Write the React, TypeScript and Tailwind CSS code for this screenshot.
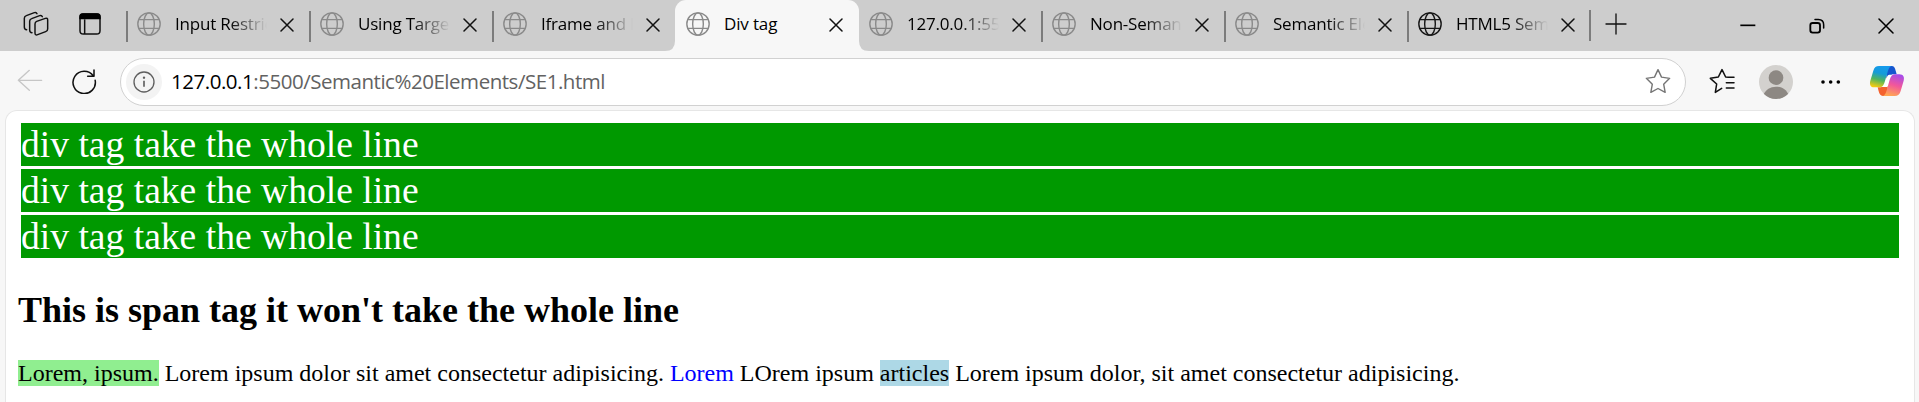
import React from "react";

type Tab = { title: string; active?: boolean; dark?: boolean; divider?: boolean };

const tabs: Tab[] = [
  { title: "Input Restrictions", divider: true },
  { title: "Using Target", divider: true },
  { title: "Iframe and Links", divider: true },
  { title: "Div tag", active: true },
  { title: "127.0.0.1:5500" },
  { title: "Non-Semantic", divider: true },
  { title: "Semantic Elements", divider: true },
  { title: "HTML5 Semantic", dark: true, divider: true },
];

function Globe({ dark }: { dark?: boolean }) {
  return (
    <svg viewBox="0 0 72 72" fill="none" strokeWidth="4.2" className={dark ? "size-6 shrink-0 stroke-[#161616]" : "size-6 shrink-0 stroke-[#8a8a8a]"}>
      <circle cx="36" cy="36" r="33.5" />
      <ellipse cx="36" cy="36" rx="16" ry="33.5" />
      <path d="M5 23H67M5 49H67" />
    </svg>
  );
}

function Cross() {
  return (
    <svg viewBox="0 0 42 42" fill="none" stroke="#111" strokeWidth="4.5" strokeLinecap="round" className="size-3.5 shrink-0">
      <path d="M3 3L39 39M39 3L3 39" />
    </svg>
  );
}

function Workspaces() {
  return (
    <svg viewBox="0 0 78 78" fill="none" stroke="#111" strokeWidth="4.4" strokeLinecap="round" strokeLinejoin="round" className="size-[26px] shrink-0">
      <path d="M41 31L67 22Q74 20 74 27V54Q74 60 68 62L44 71Q36 74 36 66V39Q36 33 41 31Z" />
      <path d="M27 65Q20 65 20 57V31Q20 25 26 23L50 14Q56 12 58 17" />
      <path d="M11 56Q4 56 4 48V22Q4 16 10 14L34 5Q40 3 42 8" />
    </svg>
  );
}

function TabActions() {
  return (
    <svg viewBox="0 0 72 72" className="size-6 shrink-0">
      <rect x="6" y="6" width="60" height="60" rx="10" fill="none" stroke="#111" strokeWidth="4.5" />
      <path d="M4 22V14Q4 4 14 4H58Q68 4 68 14V22Z" fill="#000" />
      <path d="M20 22V66" stroke="#111" strokeWidth="4.5" />
    </svg>
  );
}

function TabItem({ tab }: { tab: Tab }) {
  return (
    <div
      className={
        tab.active
          ? "relative flex h-[51px] w-[184px] -mr-px shrink-0 items-center rounded-t-[11px] bg-[#f7f7f7] pl-[11px]"
          : "relative flex h-[51px] w-[183px] shrink-0 items-center pl-[11px]"
      }
    >
      {tab.divider && <span className="absolute left-0 top-[11px] h-[31px] w-[1.5px] bg-[#7c7c7c]" />}
      {tab.active && (
        <>
          <svg viewBox="0 0 10 10" className="absolute -left-2.5 bottom-0 size-2.5">
            <path d="M10 0V10H0Q10 10 10 0Z" fill="#f7f7f7" />
          </svg>
          <svg viewBox="0 0 10 10" className="absolute -right-2.5 bottom-0 size-2.5">
            <path d="M0 0V10H10Q0 10 0 0Z" fill="#f7f7f7" />
          </svg>
        </>
      )}
      <div className="flex items-center pb-[3px]">
        <Globe dark={tab.dark} />
        <span
          className={
            tab.active
              ? "ml-[14px] w-[93px] overflow-hidden whitespace-nowrap text-[17px] leading-6 tracking-[-0.15px]"
              : "ml-[14px] w-[93px] overflow-hidden whitespace-nowrap text-[17px] leading-6 tracking-[-0.2px] [mask-image:linear-gradient(to_right,black_54px,transparent_92px)]"
          }
        >
          {tab.title}
        </span>
      </div>
      <div className="ml-3 pb-0.5">
        <Cross />
      </div>
    </div>
  );
}

function Copilot() {
  return (
    <svg viewBox="0 0 108 96" className="h-8 w-9 shrink-0">
      <defs>
        <linearGradient id="cool" x1="0.6" y1="0" x2="0.35" y2="1">
          <stop offset="0" stopColor="#169bed" />
          <stop offset="0.35" stopColor="#159bd8" />
          <stop offset="0.65" stopColor="#4fb45f" />
          <stop offset="1" stopColor="#f5cb12" />
        </linearGradient>
        <linearGradient id="warm" x1="0.7" y1="0" x2="0.4" y2="1">
          <stop offset="0" stopColor="#a64bea" />
          <stop offset="0.5" stopColor="#f2579b" />
          <stop offset="1" stopColor="#ffa653" />
        </linearGradient>
      </defs>
      <path d="M50 3H68C75 3 78 9 80 17L83 28H76C66 28 62 33 59 44L54 60Z" fill="#1656cf" />
      <path d="M58 93H42C34 93 31 87 29 79L26 67H32C42 67 46 62 49 51L54 34Z" fill="#f4622f" />
      <path d="M61 29H76L55 66H36L54 36C56 31 58 29 61 29Z" fill="#fff" />
      <path d="M30 3H68C61 5 58 13 55 24L47 51C43 63 39 67 30 67H16C4 67 1 58 4 47L13 17C16 7 21 3 30 3Z" fill="url(#cool)" />
      <path d="M78 28H91C103 28 107 37 104 47L95 78C92 88 87 93 77 93H42C49 91 51 83 54 73L62 44C66 33 70 28 78 28Z" fill="url(#warm)" />
    </svg>
  );
}

function TitleBar() {
  return (
    <div className="flex h-[51px] w-full items-center bg-[#cdcdcd]">
      <div className="flex w-[126px] shrink-0 items-center gap-[29px] pb-[3px] pl-[23px]">
        <Workspaces />
        <TabActions />
      </div>
      {tabs.map((t) => (
        <TabItem key={t.title} tab={t} />
      ))}
      <div className="flex flex-1 items-center">
        <span className="-ml-[1px] h-[31px] w-[1.5px] bg-[#7c7c7c]" />
        <svg viewBox="0 0 66 66" fill="none" stroke="#111" strokeWidth="4" strokeLinecap="round" className="-mt-1 ml-[14.500px] size-[22px]">
          <path d="M33 3V63M3 33H63" />
        </svg>
      </div>
      <div className="flex items-center gap-[53px] pr-[25.500px]">
        <svg viewBox="0 0 48 48" stroke="#000" strokeWidth="5" className="h-4 w-4">
          <path d="M1 22H46" />
        </svg>
        <svg viewBox="0 0 48 48" fill="none" stroke="#000" strokeWidth="5.500" className="h-4 w-4">
          <rect x="4" y="15" width="29" height="29" rx="7" />
          <path d="M18 4.500H28Q44 5 44 20V30" strokeLinecap="round" strokeWidth="4.500" />
        </svg>
        <svg viewBox="0 0 48 48" stroke="#000" strokeWidth="4.5" strokeLinecap="round" className="h-4 w-4">
          <path d="M3 3L45 45M45 3L3 45" />
        </svg>
      </div>
    </div>
  );
}

function Toolbar() {
  return (
    <div className="flex h-[59px] w-full items-center bg-[#f7f7f7] pb-0.5 pt-1.5">
      <svg viewBox="0 0 78 72" fill="none" stroke="#c6c6c6" strokeWidth="4" strokeLinecap="round" strokeLinejoin="round" className="-mt-1.5 ml-[17px] h-6 w-[26px] shrink-0">
        <path d="M74 37H4M37 7L4 37L37 67" />
      </svg>
      <svg viewBox="0 0 78 78" fill="none" stroke="#111" strokeWidth="4.6" strokeLinecap="round" strokeLinejoin="round" className="-mt-1 ml-7 size-[26px] shrink-0">
        <path d="M67 24A33.5 33.5 0 1 0 72.5 37M69 6V25H50" />
      </svg>
      <div className="-mt-0.5 ml-[23px] flex h-12 w-[1566px] shrink-0 items-center rounded-full border-[1.5px] border-[#d1d1d1] bg-white pl-[5px] pr-[14px]">
        <span className="flex size-9 items-center justify-center rounded-full bg-[#f3f3f3]">
          <svg viewBox="0 0 66 66" fill="none" stroke="#5f5f5f" strokeWidth="4" className="size-[22px]">
            <circle cx="33" cy="33" r="30" />
            <path d="M33 29V47" strokeWidth="5" />
            <circle cx="33" cy="20" r="3.5" fill="#5f5f5f" stroke="none" />
          </svg>
        </span>
        <span className="-mt-0.5 ml-[9px] flex-1 whitespace-nowrap text-[20.5px] leading-7 tracking-[-0.47px] text-[#626262]">
          <span className="text-black">127.0.0.1</span>:5500/Semantic%20Elements/SE1.html
        </span>
        <svg viewBox="0 0 78 78" fill="none" stroke="#757575" strokeWidth="4.2" strokeLinejoin="round" className="-mt-0.5 size-[26px]">
          <path d="M39 5L49.5 27.5L74 31L56 48.500L60.500 73L39 61.500L17.500 73L22 48.500L4 31L28.500 27.500Z" />
        </svg>
      </div>
      <div className="-mt-0.5 flex flex-1 items-center">
        <svg viewBox="0 0 78 78" fill="none" stroke="#111" strokeWidth="4.6" strokeLinecap="round" strokeLinejoin="round" className="-mt-0.5 ml-[23px] size-[26px]">
          <path d="M38 61L19 73L23 48L4 31L28 27L39 5L50 27L58 28H75M52 44H75M52 60H75" />
        </svg>
        <svg viewBox="0 0 102 102" className="ml-6 size-[34px]">
          <defs>
            <clipPath id="avatar">
              <circle cx="51" cy="51" r="51" />
            </clipPath>
          </defs>
          <g clipPath="url(#avatar)">
            <rect width="102" height="102" fill="#d3d1ce" />
            <circle cx="51" cy="38" r="22" fill="#8d8883" />
            <path d="M13 90C20 73 34 65 51 65S82 73 89 90L76 102H26Z" fill="#8d8883" />
          </g>
        </svg>
        <svg viewBox="0 0 60 12" className="ml-7 h-1 w-5">
          <circle cx="6" cy="6" r="5.4" />
          <circle cx="29" cy="6" r="5.4" />
          <circle cx="52" cy="6" r="5.4" />
        </svg>
        <div className="-mt-px ml-7">
          <Copilot />
        </div>
      </div>
    </div>
  );
}

export default function App() {
  return (
    <div className="flex h-[402px] w-full flex-col overflow-hidden bg-[#f7f7f7] font-['Open_Sans','Noto_Sans',sans-serif] text-black">
      <TitleBar />
      <Toolbar />
      <main className="ml-[5px] mr-1 flex-1 rounded-t-xl border border-b-0 border-[#e6e6e6] bg-white px-3 pt-3 font-['Liberation_Serif',serif]">
        <div className="flex flex-col gap-[3px] px-[3px]">
          {[0, 1, 2].map((i) => (
            <div key={i} className="h-[43px] w-full bg-[#009900] text-[37.6px] leading-[43px] text-white">
              div tag take the whole line
            </div>
          ))}
        </div>
        <h2 className="mt-[31px] text-[36px] font-bold leading-[42px]">This is span tag it won't take the whole line</h2>
        <p className="mt-7 whitespace-nowrap text-[24px] leading-[28px]">
          <span className="bg-[#90ee90]">Lorem, ipsum.</span> Lorem ipsum dolor sit amet consectetur adipisicing.{" "}
          <span className="text-[#0000ff]">Lorem</span> LOrem ipsum <span className="bg-[#add8e6]">articles</span> Lorem ipsum
          dolor, sit amet consectetur adipisicing.
        </p>
      </main>
    </div>
  );
}
